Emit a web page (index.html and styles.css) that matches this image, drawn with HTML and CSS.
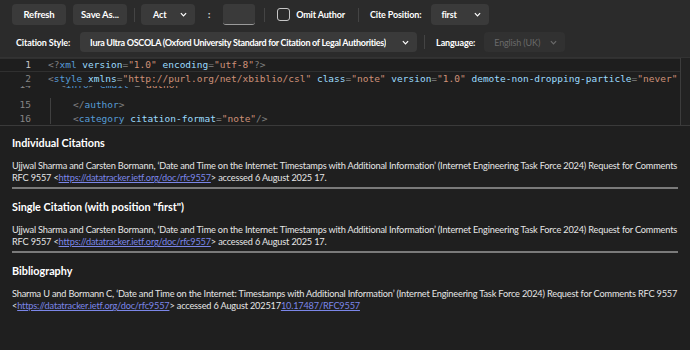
FILE: index.html
```html
<!DOCTYPE html>
<html lang="en">
<head>
    <meta charset="UTF-8">
    <title>CSL Preview</title>
    <link rel="stylesheet" href="styles.css">
</head>
<body>
    <div class="toolbar">
        <div class="tool-row">
            <button class="btn">Refresh</button>
            <button class="btn">Save As...</button>
            <span class="sep"></span>
            <div class="dropdown dd-act"><span>Act</span><svg class="chev" viewBox="0 0 8 5"><path d="M1 1l3 3 3-3"/></svg></div>
            <span class="colon">:</span>
            <div class="num-input"></div>
            <span class="sep"></span>
            <label class="check"><span class="box"></span>Omit Author</label>
            <span class="sep"></span>
            <span class="label">Cite Position:</span>
            <div class="dropdown dd-pos"><span>first</span><svg class="chev" viewBox="0 0 8 5"><path d="M1 1l3 3 3-3"/></svg></div>
        </div>
        <div class="tool-row row-2">
            <span class="label">Citation Style:</span>
            <div class="dropdown dd-style"><span class="dd-text">Iura Ultra OSCOLA (Oxford University Standard for Citation of Legal Authorities)</span><svg class="chev" viewBox="0 0 8 5"><path d="M1 1l3 3 3-3"/></svg></div>
            <span class="sep"></span>
            <span class="label">Language:</span>
            <div class="dropdown dd-lang disabled"><span>English (UK)</span><svg class="chev" viewBox="0 0 8 5"><path d="M1 1l3 3 3-3"/></svg></div>
        </div>
    </div>

    <div class="editor">
        <div class="code">
            <div class="sticky">
                <div class="line current"><span class="ln">1</span><span class="src"><span class="p">&lt;?</span><span class="t">xml</span> <span class="a">version</span><span class="p">=</span><span class="s">"1.0"</span> <span class="a">encoding</span><span class="p">=</span><span class="s">"utf-8"</span><span class="p">?&gt;</span></span></div>
                <div class="line"><span class="ln">2</span><span class="src"><span class="p">&lt;</span><span class="t">style</span> <span class="a">xmlns</span><span class="p">=</span><span class="s">"http://purl.org/net/xbiblio/csl"</span> <span class="a">class</span><span class="p">=</span><span class="s">"note"</span> <span class="a">version</span><span class="p">=</span><span class="s">"1.0"</span> <span class="a">demote-non-dropping-particle</span><span class="p">=</span><span class="s">"never"</span> <span class="a">default-locale</span><span class="p">=</span><span class="s">"en-GB"</span><span class="p">&gt;</span></span></div>
            </div>
            <div class="scrolled">
                <div class="line partial"><span class="ln">14</span><span class="src ind-1"><span class="p">&lt;</span><span class="t">info</span><span class="p">&gt;</span> <span class="t">email</span> <span class="p">=</span> <span class="s">author</span></span></div>
                <div class="line"><span class="ln">15</span><span class="src ind-2"><span class="p">&lt;/</span><span class="t">author</span><span class="p">&gt;</span></span></div>
                <div class="line"><span class="ln">16</span><span class="src ind-2"><span class="p">&lt;</span><span class="t">category</span> <span class="a">citation-format</span><span class="p">=</span><span class="s">"note"</span><span class="p">/&gt;</span></span></div>
            </div>
        </div>
        <div class="vscroll"></div>
    </div>

    <div class="output">
        <h3>Individual Citations</h3>
        <p>Ujjwal Sharma and Carsten Bormann, ‘Date and Time on the Internet: Timestamps with Additional Information’ (Internet Engineering Task Force 2024) Request for Comments RFC 9557 &lt;<a href="#">https://datatracker.ietf.org/doc/rfc9557</a>&gt; accessed 6 August 2025 17.</p>
        <hr>
        <h3>Single Citation (with position "first")</h3>
        <p>Ujjwal Sharma and Carsten Bormann, ‘Date and Time on the Internet: Timestamps with Additional Information’ (Internet Engineering Task Force 2024) Request for Comments RFC 9557 &lt;<a href="#">https://datatracker.ietf.org/doc/rfc9557</a>&gt; accessed 6 August 2025 17.</p>
        <hr>
        <h3>Bibliography</h3>
        <p>Sharma U and Bormann C, ‘Date and Time on the Internet: Timestamps with Additional Information’ (Internet Engineering Task Force 2024) Request for Comments RFC 9557 &lt;<a href="#">https://datatracker.ietf.org/doc/rfc9557</a>&gt; accessed 6 August 202517<a href="#">10.17487/RFC9557</a></p>
    </div>
</body>
</html>
```

FILE: styles.css
```css
html, body { margin: 0; height: 100%; }
body { background: #1f1f1f; color: #e6e6e6; font-family: "Lato", "Noto Sans", sans-serif; overflow: hidden; }

.toolbar { background: #2b2b2b; height: 57px; padding: 4px 0 0 12px; box-sizing: border-box; font-size: 9px; letter-spacing: -0.15px; }
.tool-row { display: flex; align-items: center; height: 21px; }
.row-2 { margin-top: 7px; height: 20px; padding-left: 4px; }

.btn { width: 54px; height: 21px; margin-right: 7px; background: #3a3a3a; color: #fff; border: none; border-radius: 4px; font: 700 9.5px "Lato", sans-serif; letter-spacing: -0.15px; padding: 0; }
.sep { width: 1px; height: 14px; background: #444; margin: 0 6px 0 0; }
.dropdown { display: flex; align-items: center; justify-content: space-between; height: 21px; background: #3a3a3a; border-radius: 4px; padding: 0 8px 0 10px; box-sizing: border-box; color: #fff; font-weight: 700; white-space: nowrap; }
.dd-text { overflow: hidden; }
.chev { width: 7px; height: 5px; fill: none; stroke: #fff; stroke-width: 1.4; flex: none; margin-left: 6px; }
.dd-act { width: 54px; padding-left: 12px; }
.colon { margin: 0 13px; font-weight: 700; }
.num-input { width: 32px; height: 21px; background: #3a3a3a; border-radius: 3px; border-bottom: 1px solid #9a9a9a; box-sizing: border-box; margin-right: 9px; }
.check { display: flex; align-items: center; color: #fff; font-weight: 700; margin: 0 13px 0 6px; }
.box { width: 11px; height: 11px; border: 1px solid #c6c6c6; border-radius: 3px; margin-right: 6px; }
.label { color: #fff; font-weight: 700; }
.tool-row > .label:not(:first-child) { margin-left: 5px; }
.dd-pos { width: 58px; margin-left: 10px; }
.dd-style { width: 337px; height: 20px; margin: 0 7px 0 10px; letter-spacing: -0.3px; }
.dd-lang { width: 81px; height: 20px; margin-left: 9px; font-weight: 400; }
.disabled { background: #313131; color: #6a6a6a; }
.disabled .chev { stroke: #6a6a6a; }

.editor { display: flex; height: 69px; background: #1e1e1e; border-top: 1px solid #333; border-bottom: 1px solid #3a3a3a; box-sizing: border-box; }
.code { flex: 1; overflow: hidden; font: 9.5px/14px "DejaVu Sans Mono", monospace; }
.vscroll { width: 9px; border-left: 1px solid #3c3c3c; background: #222; }
.sticky { background: #1e1e1e; }
.line { display: flex; height: 14px; white-space: pre; }
.line.current { box-shadow: inset 0 -1px 0 #303030, inset 0 1px 0 #303030; }
.ln { width: 31px; text-align: right; color: #858585; padding-right: 17px; flex: none; }
.current .ln { color: #c6c6c6; }
.src { color: #d4d4d4; }
.ind-1 { padding-left: 12px; }
.ind-2 { padding-left: 22px; border-left: 1px solid #404040; margin-left: 2px; }
.scrolled { height: 38px; overflow: hidden; }
.partial { height: 12px; overflow: hidden; }
.partial > span { position: relative; top: -8px; }
.t { color: #569cd6; }
.a { color: #9cdcfe; }
.s { color: #ce9178; }
.p { color: #808080; }

.output { padding: 10px 12px 0 12px; }
.output h3 { margin: 0 0 10px; font: 700 10.8px/14px "Lato", sans-serif; color: #fff; }
.output p { margin: 0 0 3px; font-size: 9.2px; line-height: 12px; letter-spacing: -0.18px; color: #e6e6e6; }
.output a { color: #7b86e8; }
.output hr { margin: 0 0 11px; border: none; height: 2px; background: #7a7a7a; }
```
